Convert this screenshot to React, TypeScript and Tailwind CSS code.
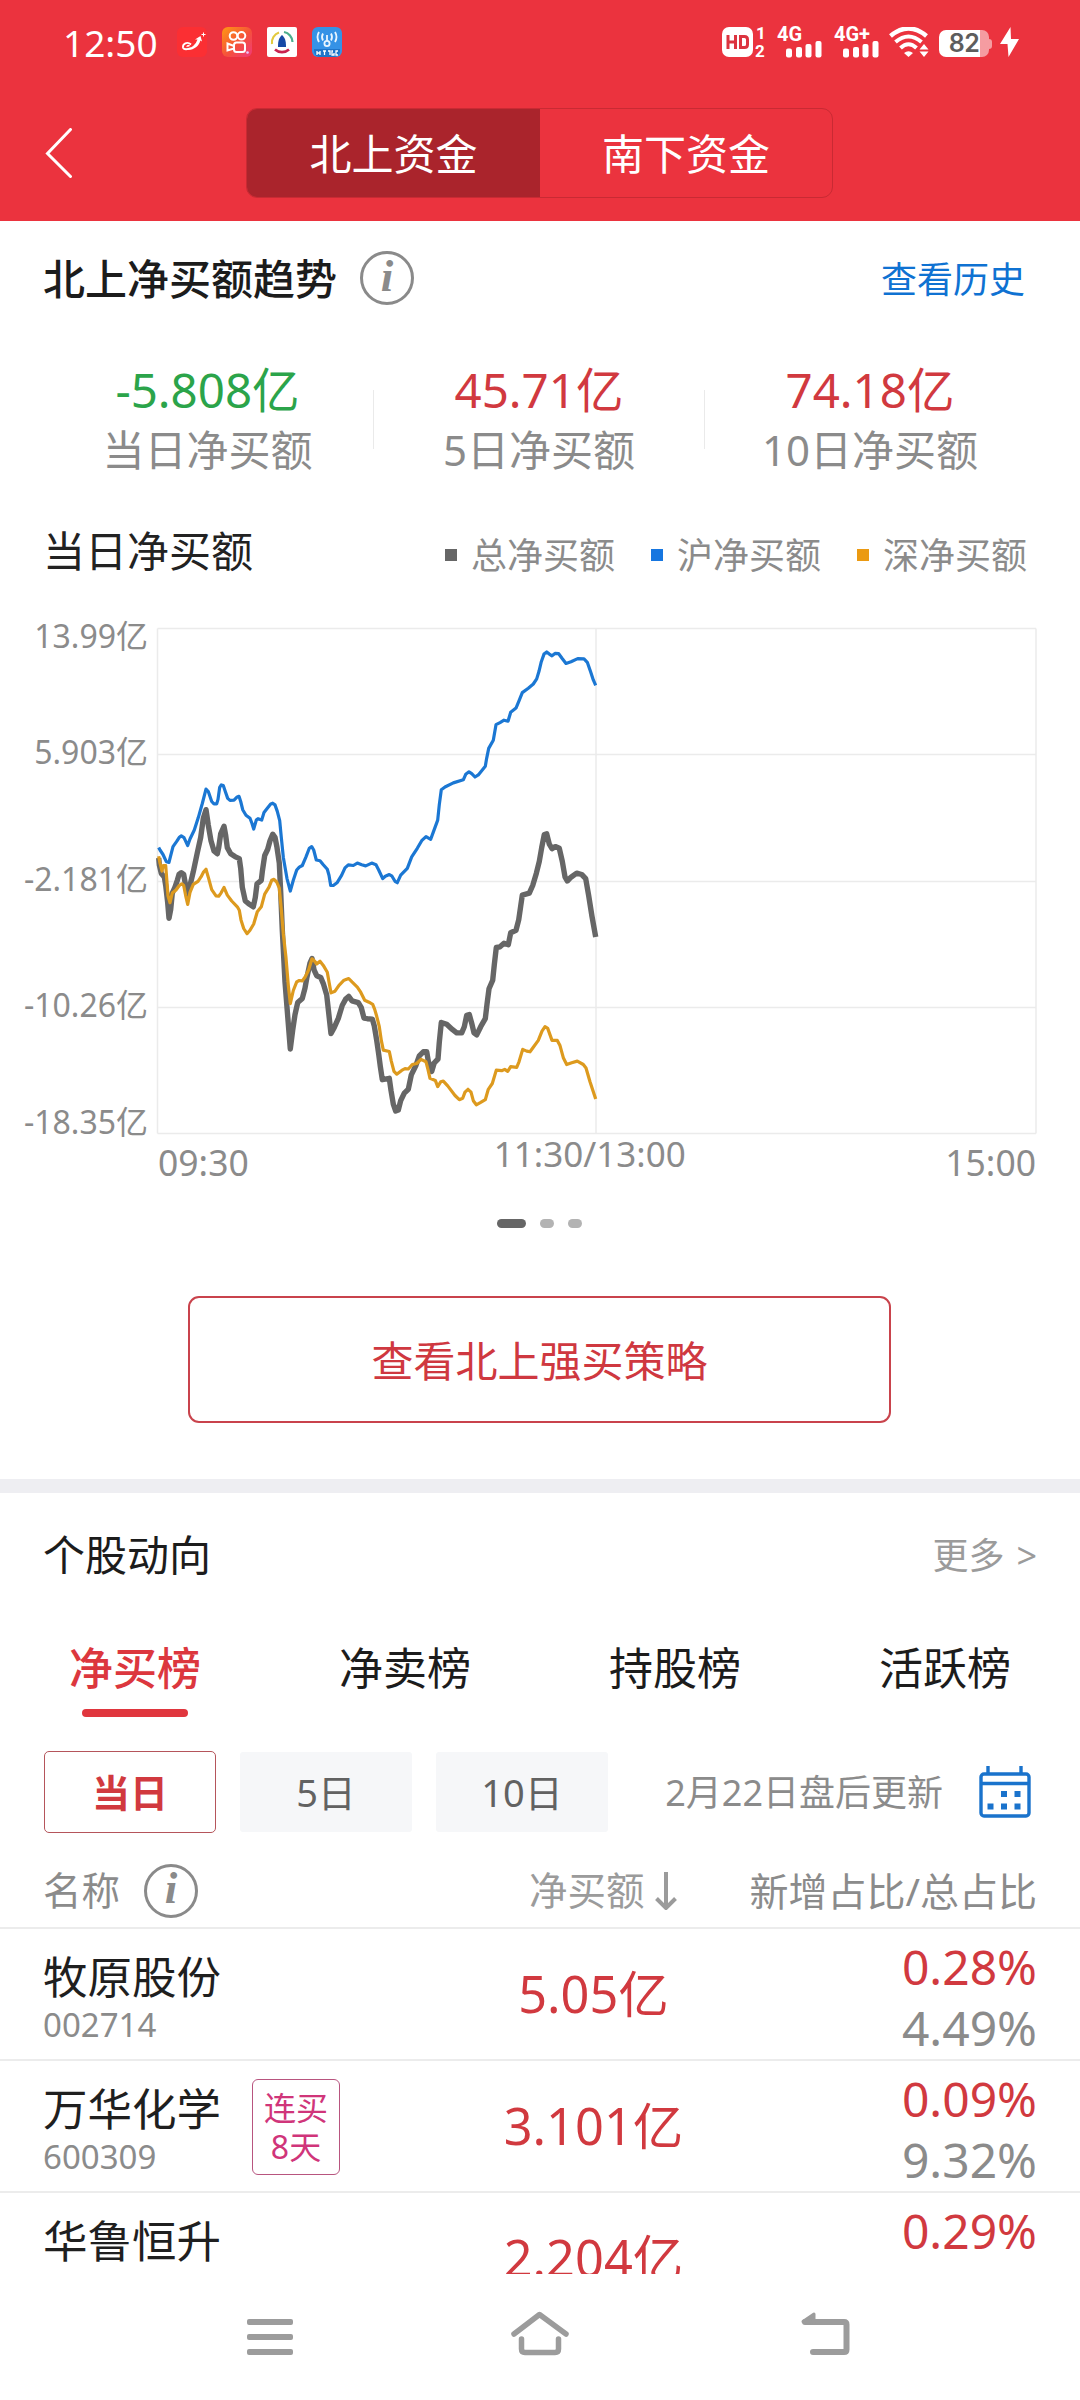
import React from "react";

const BLUE_A =
  "56,690 60,697 69,710 79,731 87,733 91,718 99,687 110,672 118,660 124,656 132,661 143,684 150,665 163,639 175,603 187,562 198,520 205,527 215,556 222,563 230,563 234,550 239,515 244,508 250,510 256,527 263,547 270,553 282,552 290,544 297,541 302,556 308,580 318,596 330,605 336,620 341,636 349,610 354,606 365,610 372,588 383,574 392,563 398,561 405,566 412,585 419,612 424,660 430,718 441,780 451,816 460,785 470,755 478,747 487,742 498,717 508,692 515,687 521,697 529,726 540,728 550,740 562,753 567,770 572,800 580,800 592,791 605,770 615,749 625,740 640,742 652,735 665,740 677,743 695,735 708,740 716,755";
const BLUE_B =
  "38,780 46,773 58,768 66,773 75,788 82,792 92,770 112,750 125,717 142,692 155,670 168,658 182,666 190,645 203,610 208,565 214,522 225,514 250,502 280,493 287,477 297,470 305,475 315,485 325,479 346,454 350,430 356,402 370,378 378,333 390,327 402,320 414,323 422,297 438,285 448,262 457,240 475,227 490,215 500,200 507,178 514,150 522,128 530,122 538,128 546,133 555,126 566,127 576,140 588,155 603,150 623,141 642,142 652,152 662,180 670,203 677,219";
const GRAY_A =
  "56,720 58,740 64,765 73,775 77,800 83,850 87,895 92,870 97,822 105,805 112,785 117,768 124,763 131,768 136,795 143,828 150,800 160,760 172,705 182,660 190,605 198,580 205,625 213,670 222,700 232,708 236,690 242,650 252,628 257,655 262,690 272,708 285,716 298,722 302,750 307,805 316,845 325,852 340,862 346,835 351,795 364,785 367,760 374,713 383,695 390,670 398,651 405,660 411,690 418,735 422,820 427,930 435,1080 443,1180 451,1275 458,1220 465,1175 473,1140 487,1128 495,1098 500,1070 510,1025 516,1012 522,1045 530,1062 542,1067 550,1085 560,1118 566,1170 573,1230 583,1212 595,1186 607,1148 617,1130 626,1122 636,1135 655,1140 664,1155 672,1185 682,1187 697,1188";
const GRAY_B =
  "13,1208 20,1250 26,1290 31,1325 37,1364 58,1360 63,1395 70,1435 77,1455 85,1452 92,1425 103,1403 115,1392 124,1350 138,1322 148,1295 160,1283 170,1283 175,1310 185,1340 193,1315 204,1304 208,1255 214,1198 230,1203 247,1218 260,1228 275,1228 283,1210 290,1177 298,1175 305,1200 312,1228 320,1234 332,1210 346,1187 351,1145 357,1100 368,1075 373,1030 379,980 390,978 402,968 415,972 422,937 438,930 446,900 452,860 457,828 478,822 488,800 499,765 508,730 515,690 523,652 530,650 538,680 546,693 556,687 568,692 577,730 585,775 592,787 603,776 620,764 635,768 647,780 656,830 666,890 677,950";
const ORANGE_A =
  "56,715 60,735 66,758 70,742 77,742 80,780 84,830 90,850 97,822 108,813 118,800 125,795 131,800 137,830 143,855 150,820 160,797 174,788 183,775 190,762 198,753 206,780 215,812 228,830 236,831 243,822 252,806 262,828 275,845 292,862 298,872 303,900 311,925 321,940 330,930 341,912 352,876 364,862 374,825 387,805 395,785 402,782 410,790 418,808 424,870 430,940 438,1010 445,1090 451,1143 460,1105 470,1080 478,1076 487,1077 496,1065 506,1045 516,1013 524,1020 530,1028 540,1020 550,1032 562,1052 568,1085 573,1112 585,1107 597,1090 612,1075 626,1070 636,1080 652,1095 662,1110 674,1133 687,1139";
const ORANGE_B =
  "8,1145 14,1160 20,1180 28,1210 34,1250 40,1278 58,1282 64,1310 72,1340 80,1348 95,1337 105,1332 115,1333 127,1320 140,1317 153,1305 168,1312 174,1335 180,1360 196,1366 203,1384 212,1370 220,1368 233,1382 255,1410 268,1422 278,1418 285,1400 294,1392 303,1400 310,1425 319,1437 332,1430 346,1422 355,1392 367,1375 379,1336 395,1338 404,1334 413,1340 422,1326 440,1328 447,1312 458,1276 470,1281 480,1283 490,1270 505,1250 516,1223 525,1210 533,1215 546,1250 562,1250 570,1265 580,1300 590,1320 605,1315 622,1310 640,1320 648,1330 660,1370 677,1420";

/** Joins the two halves of the morning session into one polyline in chart pixels. */
function session(first: string, second: string): string {
  const half = (s: string, shift: number) =>
    s.split(" ").map((p) => {
      const [x, y] = p.split(",").map(Number);
      return `${((x + shift) / 3 - 10).toFixed(1)},${(y / 2.904 - 12).toFixed(1)}`;
    });
  return [...half(first, 0), ...half(second, 690)].join(" ");
}

const SERIES = [
  { color: "#1b77d3", width: 3.2, points: session(BLUE_A, BLUE_B) },
  { color: "#666666", width: 5.4, points: session(GRAY_A, GRAY_B) },
  { color: "#dd9a1e", width: 3.2, points: session(ORANGE_A, ORANGE_B) },
];

function InfoIcon() {
  return (
    <span className="flex h-[54px] w-[54px] items-center justify-center rounded-full border-[3px] border-[#8a8a8a]">
      <span className="-mt-1 font-['Liberation_Serif',serif] text-[45px] leading-none font-bold text-[#8a8a8a] italic">i</span>
    </span>
  );
}

function AppIcons() {
  return (
    <div className="flex gap-[15px]">
      <svg width="30" height="30" viewBox="0 0 30 30">
        <rect width="30" height="30" rx="6" fill="#fb2f33" />
        <path d="M14 17.500 C10 14 5.500 17 6 20.500 C6.500 23 11 22.500 14 21" fill="none" stroke="#fff" strokeWidth="1.800" />
        <path d="M9 19.500 Q11 16.500 13 18.500 Q12 20.500 9 19.500Z M9 22.500 Q18 20 20.500 12.500 L18 12.500 L23.500 9 L25 14.500 L23.300 13.500 C22 20 15 24 9 22.500Z" fill="#fff" />
        <path d="M26.500 5.500v4M24.500 7.500h4" stroke="#fff" strokeWidth="1" />
      </svg>
      <svg width="30" height="30" viewBox="0 0 30 30">
        <defs>
          <linearGradient id="ks" x1="0" y1="0" x2="1" y2="1">
            <stop offset="0" stopColor="#ff9a12" />
            <stop offset="0.55" stopColor="#f5503c" />
            <stop offset="1" stopColor="#f03a7a" />
          </linearGradient>
        </defs>
        <rect width="30" height="30" rx="6" fill="url(#ks)" />
        <g fill="none" stroke="#fff" strokeWidth="2">
          <circle cx="11.5" cy="9" r="3.8" />
          <circle cx="19.5" cy="8.8" r="3.8" />
          <rect x="12" y="15.5" width="11" height="9.5" rx="2.5" />
          <path d="M12 19 L5.500 16.500 V23.500 L12 21.500" />
        </g>
        <circle cx="25.500" cy="25.500" r="1.300" fill="#e9c6ff" />
      </svg>
      <svg width="30" height="30" viewBox="0 0 30 30">
        <rect width="30" height="30" rx="2" fill="#fff" />
        <g fill="none" strokeWidth="2.2">
          <path d="M5 17 A10.500 10.500 0 0 1 12 5.500" stroke="#e3c93d" />
          <path d="M17 5 A10.500 10.500 0 0 1 25.500 15" stroke="#4cae8d" />
          <path d="M8 22.500 A10.500 10.500 0 0 0 22 22.500" stroke="#c9214e" strokeWidth="2.600" />
        </g>
        <path d="M15 8 C18 11 19 13 19 20 H11 C11 13 12 11 15 8Z" fill="#1748a5" />
      </svg>
      <svg width="30" height="30" viewBox="0 0 30 30">
        <rect width="30" height="30" rx="6" fill="#3592e6" />
        <path d="M2 22h26v2a6 6 0 0 1-6 6H8a6 6 0 0 1-6-6Z" fill="#1f74c8" />
        <g fill="none" stroke="#e8f5ff" strokeWidth="1.800">
          <circle cx="15" cy="16.500" r="2.600" />
          <path d="M15 14V8M11 6.500q-2 3.500 0 7M7 5q-3 5 0 10M19 6.500q2 3.500 0 7M23 5q3 5 0 10" />
        </g>
        <path d="M5 24v4M8 24v4M5 26h3M11 24h3M12.500 24v4M16 24h2v4M21 24h-1v4h2v-2M26 24h-2v4h2" fill="none" stroke="#fff" strokeWidth="1.300" />
      </svg>
    </div>
  );
}

function Signal({ label, className }: { label: string; className: string }) {
  return (
    <div className={className}>
      <span className="absolute top-[-3px] left-0 font-['Roboto',sans-serif] text-[20px] leading-none font-bold whitespace-nowrap text-white">{label}</span>
      <svg className="absolute top-[14px] left-[9px]" width="36" height="17" viewBox="0 0 36 17" fill="#fff">
        <rect x="0" y="7.500" width="6" height="9" rx="2" />
        <rect x="10" y="6" width="6" height="10.500" rx="2" />
        <rect x="19.500" y="3" width="6" height="13.500" rx="2" />
        <rect x="29.500" y="0" width="6" height="16.500" rx="2" />
      </svg>
    </div>
  );
}

function StatusBar() {
  return (
    <div className="flex h-[84px] items-center pl-[63px] text-white">
      <span className="mt-[1px] w-[114px] text-[37px] leading-none">12:50</span>
      <AppIcons />
      <div className="ml-[380px] flex h-[30px]">
        <div className="relative w-[55px]">
          <div className="flex h-[30px] w-[31px] items-center justify-center rounded-[7px] bg-white">
            <svg width="24" height="14" viewBox="0 0 24 14" fill="none" stroke="#dc3440" strokeWidth="3">
              <path d="M2 0v14M9.500 0v14M2 7h7.500M14.500 1.500h4q3 0 3 3v5q0 3-3 3h-4z" />
            </svg>
          </div>
          <span className="absolute top-[-2px] left-[34px] font-['Roboto',sans-serif] text-[17px] leading-none font-bold">1</span>
          <span className="absolute top-[16px] left-[33px] font-['Roboto',sans-serif] text-[17px] leading-none font-bold">2</span>
        </div>
        <Signal label="4G" className="relative w-[57px]" />
        <Signal label="4G+" className="relative w-[55px]" />
        <svg width="40" height="30" viewBox="0 0 40 30" fill="none" stroke="#fff">
          <path d="M1.500 9 Q19.500 -6 37.500 9" strokeWidth="4.500" />
          <path d="M6.500 15 Q19.500 4 32.500 15" strokeWidth="4" />
          <path d="M11.500 21 Q19.500 13.500 27.500 21" strokeWidth="4" />
          <path d="M15 26 Q19.500 22.500 24 26 L19.500 30Z M35 17 L39.500 22.500 H30.500Z M35 30 L39.500 24.500 H30.500Z" fill="#fff" stroke="none" />
        </svg>
        <div className="ml-[10px] flex h-[27px] items-center self-end">
          <div className="flex h-[27px] w-[50px] items-center justify-center rounded-[7px] bg-linear-to-r from-white from-82% to-[#f59ca1] to-82%">
            <span className="font-['Inter',sans-serif] text-[25px] leading-[27px] font-semibold tracking-tight text-[#5d5d5d]">82</span>
          </div>
          <div className="h-[10px] w-[3px] rounded-r bg-[#f59ca1]" />
        </div>
        <svg className="ml-[8px]" width="19" height="30" viewBox="0 0 19 30" fill="#fff">
          <path d="M10.500 0 L0 17 H7.500 L8.500 30 L19 12 H11Z" />
        </svg>
      </div>
    </div>
  );
}

function Header() {
  return (
    <header className="h-[221px] bg-[#eb333e]">
      <StatusBar />
      <div className="flex pt-6 pl-[45px] text-[42px] leading-none text-white">
        <svg className="mt-5" width="28" height="50" viewBox="0 0 28 50" fill="none" stroke="#fff" strokeWidth="3" strokeLinecap="round">
          <path d="M25.500 1.500 L2.500 25.500 L25.500 48.500" />
        </svg>
        <div className="ml-[173px] flex h-[90px] w-[587px] overflow-hidden rounded-[11px] border border-[#c92a33]">
          <div className="flex w-[293px] items-center justify-center bg-[#aa242c] pt-px">北上资金</div>
          <div className="flex flex-1 items-center justify-center pt-px">南下资金</div>
        </div>
      </div>
    </header>
  );
}

const STATS = [
  { value: "-5.808亿", label: "当日净买额", tone: "text-[#2ba44a]", box: "w-[331px]" },
  { value: "45.71亿", label: "5日净买额", tone: "text-[#d1393f]", box: "w-[331px] border-l border-[#eaeaea]" },
  { value: "74.18亿", label: "10日净买额", tone: "text-[#d1393f]", box: "w-[331px] border-l border-[#eaeaea]" },
];

function Stats() {
  return (
    <div className="flex h-[143px] pt-[53px] pl-[42px]">
      {STATS.map((s) => (
        <div key={s.label} className={"flex h-[59px] flex-col items-center justify-center " + s.box}>
          <div className={"flex h-[60px] shrink-0 items-center text-[47.500px] leading-none " + s.tone}>{s.value}</div>
          <div className="flex h-[60px] shrink-0 items-center text-[42px] leading-none text-[#8b8b8b]">{s.label}</div>
        </div>
      ))}
    </div>
  );
}

const LEGEND = [
  { label: "总净买额", dot: "bg-[#666666]" },
  { label: "沪净买额", dot: "bg-[#1676e0]" },
  { label: "深净买额", dot: "bg-[#eb9a12]" },
];

const Y_LABELS = [
  { text: "13.99亿", gap: "-mt-[2px]" },
  { text: "5.903亿", gap: "mt-[84px]" },
  { text: "-2.181亿", gap: "mt-[95px]" },
  { text: "-10.26亿", gap: "mt-[94px]" },
  { text: "-18.35亿", gap: "mt-[85px]" },
];

function Chart() {
  return (
    <div>
      <div className="flex h-[515px]">
        <div className="flex w-[150px] flex-col items-end pr-[2px] text-[32px] text-[#8b8b8b]">
          {Y_LABELS.map((l) => (
            <div key={l.text} className={"flex h-8 shrink-0 items-center leading-none " + l.gap}>
              {l.text}
            </div>
          ))}
        </div>
        <svg width="890" height="515" viewBox="0 0 890 515" fill="none">
          <path d="M7.500 6.500H886M7.500 132.500H886M7.500 259.500H886M7.500 385.500H886M7.500 511.500H886M7.500 6.500V511.500M446 6.500V511.500M886 6.500V511.500" stroke="#ebebeb" strokeWidth="1.500" />
          {SERIES.map((s) => (
            <polyline key={s.color} points={s.points} stroke={s.color} strokeWidth={s.width} strokeLinejoin="round" />
          ))}
        </svg>
      </div>
      <div className="flex h-[50px] pr-[44px] pl-[158px] text-[35.500px] leading-none text-[#8b8b8b]">
        <span className="mt-[8px]">09:30</span>
        <span className="-mt-px ml-[245px] text-[35px]">11:30/13:00</span>
        <span className="mt-[8px] ml-auto">15:00</span>
      </div>
    </div>
  );
}

function Trend() {
  return (
    <section className="h-[1258px]">
      <div className="flex h-[116px] items-center px-[43px] leading-none">
        <h1 className="text-[42px] leading-none font-medium text-[#1c1c1c]">北上净买额趋势</h1>
        <div className="-mt-[2px] ml-[23px]">
          <InfoIcon />
        </div>
        <span className="mt-[2px] mr-[12px] ml-auto text-[36px] text-[#0f72d2]">查看历史</span>
      </div>
      <Stats />
      <div className="flex h-[142px] items-center pr-[53px] pl-[43px] leading-none">
        <h2 className="text-[42px] leading-none text-[#222]">当日净买额</h2>
        <div className="mt-[10px] ml-auto flex gap-[36px] text-[36px] text-[#8b8b8b]">
          {LEGEND.map((l) => (
            <div key={l.label} className="flex items-center gap-[14px]">
              <i className={"-mt-[3px] h-[12px] w-[12px] " + l.dot} />
              {l.label}
            </div>
          ))}
        </div>
      </div>
      <Chart />
      <div className="mt-[32px] flex justify-center gap-[14px] pr-px">
        <i className="h-[9px] w-[29px] rounded-full bg-[#666]" />
        <i className="h-[9px] w-[14px] rounded-full bg-[#b3b3b3]" />
        <i className="h-[9px] w-[14px] rounded-full bg-[#b3b3b3]" />
      </div>
      <button className="mt-[68px] ml-[188px] flex h-[127px] w-[703px] items-center justify-center rounded-[11px] border-2 border-[#c9434c] pt-[2px] text-[42px] leading-none text-[#cf3840]">
        查看北上强买策略
      </button>
    </section>
  );
}

function CalendarIcon() {
  return (
    <svg width="52" height="52" viewBox="0 0 52 52" fill="none" stroke="#1a73cc" strokeWidth="3.400">
      <rect x="2" y="8" width="48" height="42" rx="3" />
      <path d="M2 17.500H50M9 0V8M42 0V8" />
      <path d="M22 28h6M35.500 28h6M8.500 40.500h6M22 40.500h6M35.500 40.500h6" strokeWidth="6" />
    </svg>
  );
}

type Stock = { name: string; code: string; amount: string; added: string; total: string; streak?: string[] };

const STOCKS: Stock[] = [
  { name: "牧原股份", code: "002714", amount: "5.05亿", added: "0.28%", total: "4.49%" },
  { name: "万华化学", code: "600309", amount: "3.101亿", added: "0.09%", total: "9.32%", streak: ["连买", "8天"] },
  { name: "华鲁恒升", code: "", amount: "2.204亿", added: "0.29%", total: "" },
];

function StockRow({ s }: { s: Stock }) {
  return (
    <div className="flex h-[132px] shrink-0 border-t-2 border-[#ececec] pr-[43px] pl-[43px] leading-none">
      <div className="w-[178px]">
        <div className="mt-[24px] flex h-[48px] items-center text-[44.500px] whitespace-nowrap text-[#1f1f1f]">{s.name}</div>
        <div className="mt-[7px] flex h-[32px] items-center text-[33px] text-[#8b8b8b]">{s.code}</div>
      </div>
      <div className="w-[139px] pt-[18px] pl-[31px]">
        {s.streak && (
          <div className="flex h-[96px] w-[88px] flex-col items-center justify-center rounded-[6px] border-[1.500px] border-[#b8557f] text-[32px] leading-[39px] text-[#d0357a]">
            {s.streak.map((t) => (
              <span key={t} className="block h-[39px]">{t}</span>
            ))}
          </div>
        )}
      </div>
      <div className="flex h-[130px] w-[467px] items-center justify-center text-[50.500px] text-[#d1393f]">{s.amount}</div>
      <div className="ml-auto flex flex-col items-end pt-[7px] text-[48px] text-[#8b8b8b]">
        <div className="flex h-[61px] items-center text-[#d1393f]">{s.added}</div>
        <div className="flex h-[61px] items-center">{s.total}</div>
      </div>
    </div>
  );
}

function Stocks() {
  return (
    <section className="h-[781px] overflow-hidden">
      <div className="flex h-[124px] items-center justify-between px-[43px] leading-none">
        <h2 className="text-[42px] leading-none text-[#1c1c1c]">个股动向</h2>
        <span className="mt-px text-[36px] text-[#9b9b9b]">
          更多<span className="ml-[12px]">&gt;</span>
        </span>
      </div>
      <div className="grid h-[102px] grid-cols-4 text-[44px] leading-none text-[#1c1c1c]">
        <div className="relative flex items-center justify-center font-medium text-[#dc373e]">
          净买榜
          <i className="absolute bottom-[2px] left-[82px] h-[8px] w-[106px] rounded-full bg-[#e0363e]" />
        </div>
        <div className="flex items-center justify-center">净卖榜</div>
        <div className="flex items-center justify-center">持股榜</div>
        <div className="flex items-center justify-center">活跃榜</div>
      </div>
      <div className="mt-[32px] flex h-[82px] items-center pr-[49px] pl-[44px] text-[38px] leading-none">
        <div className="flex h-[82px] w-[172px] items-center justify-center rounded-[5px] border-[1.500px] border-[#b5555b] font-bold text-[#d1393f]">当日</div>
        <div className="ml-[24px] flex h-[80px] w-[172px] items-center justify-center rounded-[3px] bg-[#f6f7f9] text-[#626262]">5日</div>
        <div className="ml-[24px] flex h-[80px] w-[172px] items-center justify-center rounded-[3px] bg-[#f6f7f9] text-[#626262]">10日</div>
        <span className="mt-px ml-auto text-[36px] whitespace-nowrap text-[#8b8b8b]">2月22日盘后更新</span>
        <div className="ml-[36px]">
          <CalendarIcon />
        </div>
      </div>
      <div className="flex h-[94px] items-center pt-[21px] pr-[43px] pl-[43px] text-[38.500px] leading-none text-[#8b8b8b]">
        <span>名称</span>
        <div className="ml-[24px]">
          <InfoIcon />
        </div>
        <span className="ml-[331px] text-[#9b9b9b]">净买额</span>
        <svg className="ml-[9px]" width="24" height="38" viewBox="0 0 24 38" fill="none" stroke="#9b9b9b" strokeWidth="4">
          <path d="M12 0V36M2.500 26.500L12 36L21.500 26.500" />
        </svg>
        <span className="ml-auto text-[39px]">新增占比/总占比</span>
      </div>
      {STOCKS.map((s) => (
        <StockRow key={s.name} s={s} />
      ))}
    </section>
  );
}

function NavBar() {
  return (
    <nav className="relative flex h-[126px] bg-white pt-[36px] pl-[247px]">
      <svg width="46" height="50" viewBox="0 0 46 50" fill="#9c9c9c">
        <rect y="9" width="46" height="6" rx="2" />
        <rect y="24" width="46" height="6" rx="2" />
        <rect y="39" width="46" height="6" rx="2" />
      </svg>
      <svg className="ml-[217px]" width="60" height="50" viewBox="0 0 60 50" fill="none" stroke="#9c9c9c" strokeWidth="5.500" strokeLinecap="round" strokeLinejoin="round">
        <path d="M4 24 L29.500 4.500 L56 24" />
        <path d="M11.500 29V39Q11.500 42.500 15 42.500H45Q48.500 42.500 48.500 39V29" />
      </svg>
      <svg className="ml-[231px]" width="50" height="50" viewBox="0 0 50 50" fill="none" stroke="#9c9c9c" strokeWidth="6" strokeLinecap="round">
        <path d="M4 12H43Q45.500 12 45.500 14.500V39.500Q45.500 42 43 42H12" />
        <path d="M2 11.500 L13 4 V12Z" fill="#9c9c9c" strokeWidth="3" strokeLinejoin="round" />
      </svg>
    </nav>
  );
}

export default function App() {
  return (
    <div className="h-[2400px] w-[1080px] overflow-hidden bg-white font-['Noto_Sans','Noto_Sans_CJK_SC',sans-serif]">
      <Header />
      <Trend />
      <div className="h-[14px] bg-[#eeeef2]" />
      <Stocks />
      <NavBar />
    </div>
  );
}
